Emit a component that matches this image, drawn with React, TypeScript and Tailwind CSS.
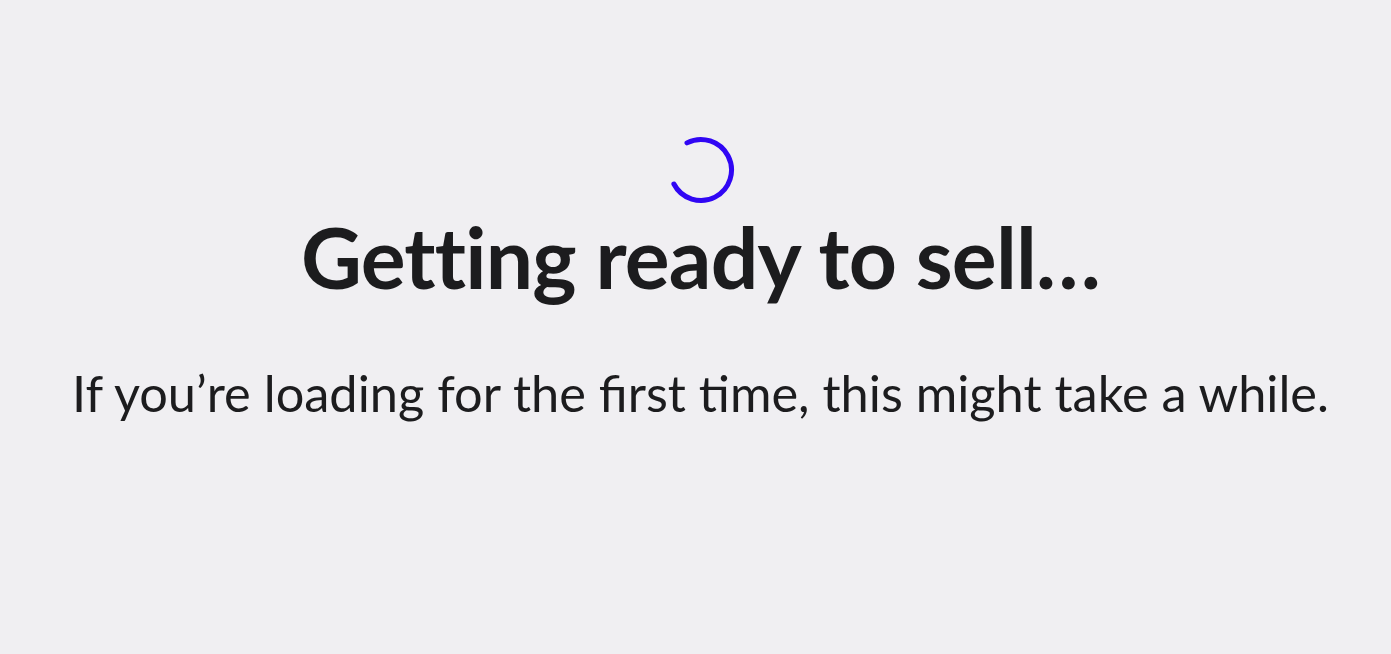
import React from 'react';

const Spinner: React.FC = () => (
  <svg width="70" height="70" viewBox="0 0 70 70" className="block">
    <path
      d="M 21 7.9 A 30.5 30.5 0 1 1 7.9 49"
      fill="none"
      stroke="#3006f4"
      strokeWidth="5"
      strokeLinecap="round"
    />
  </svg>
);

const App: React.FC = () => {
  return (
    <div className="min-h-[654px] w-full bg-[#f0eff2] flex flex-col items-center pt-[135px] pl-[10px] font-['Lato','Liberation_Sans',sans-serif] text-[#1c1c1e]">
      <Spinner />
      <h1 className="mt-[2px] text-[84px] leading-[100px] font-bold tracking-[-0.8px]">Getting ready to sell…</h1>
      <p className="mt-[56px] text-[50.5px] leading-[60px] font-normal">
        If you’re loading for the first time, this might take a while.
      </p>
    </div>
  );
};

export default App;
